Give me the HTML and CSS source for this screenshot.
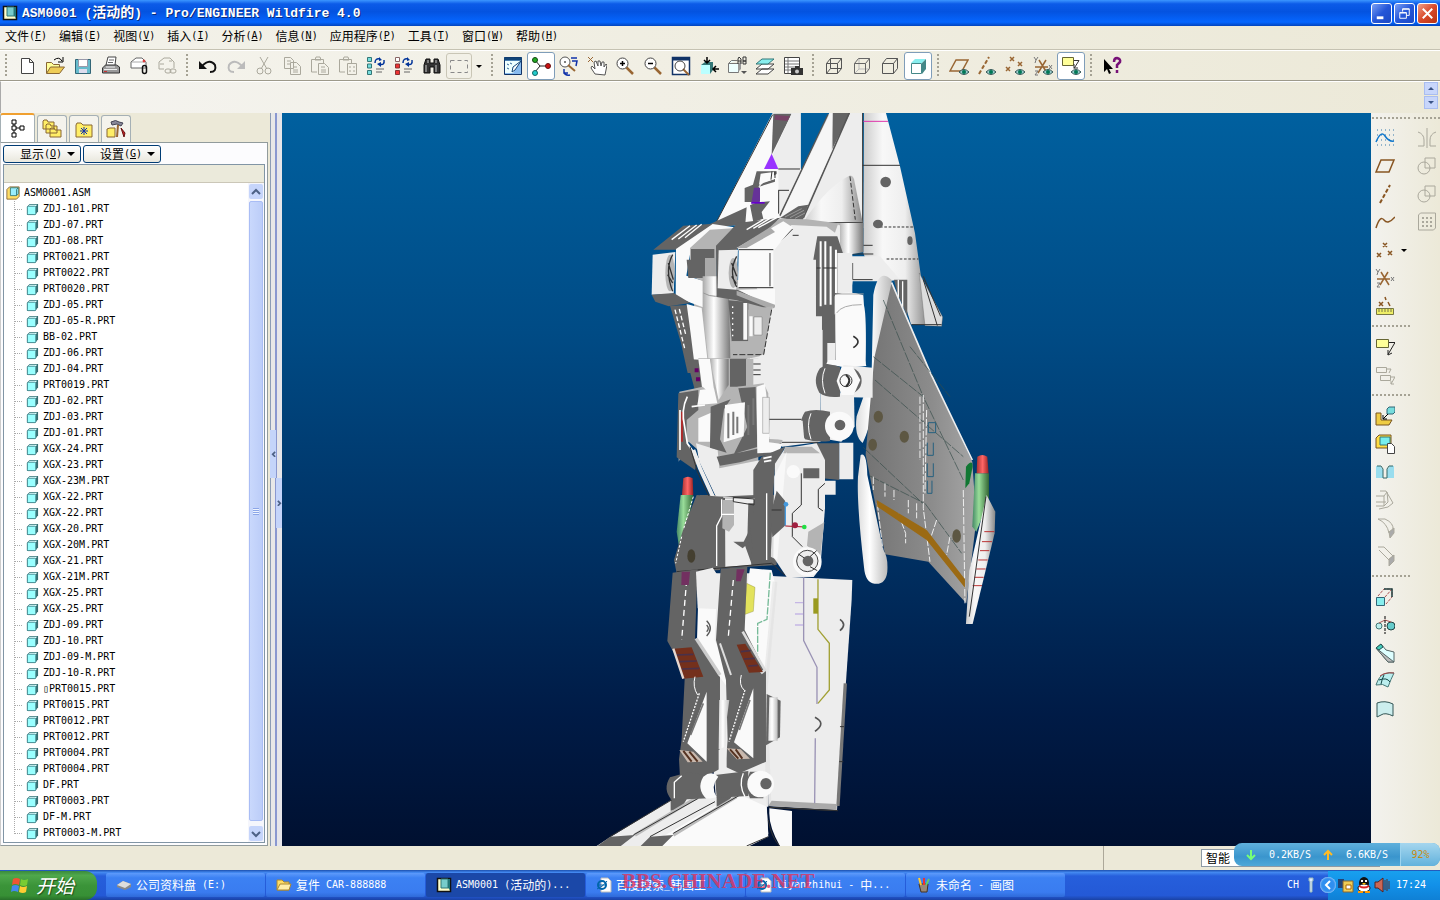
FILE: index.html
```html
<!DOCTYPE html>
<html lang="zh-CN">
<head>
<meta charset="UTF-8">
<meta name="viewport" content="width=device-width, initial-scale=1.0">
<title>ASM0001 (活动的) - Pro/ENGINEER Wildfire 4.0</title>
<link rel="stylesheet" href="styles.css">
</head>
<body>
    <!-- shared icon parts -->
    <svg class="defs" aria-hidden="true">
        <defs>
            <linearGradient id="tube"><stop offset="0" stop-color="#aaa"/><stop offset=".4" stop-color="#fff"/><stop offset="1" stop-color="#777"/></linearGradient>
            <linearGradient id="float"><stop offset="0" stop-color="#ddd"/><stop offset=".4" stop-color="#fff"/><stop offset="1" stop-color="#bbb"/></linearGradient>
            <linearGradient id="cone"><stop offset="0" stop-color="#ccc"/><stop offset=".3" stop-color="#f8f8f8"/><stop offset=".65" stop-color="#eee"/><stop offset="1" stop-color="#888"/></linearGradient>
            <linearGradient id="wing" x1="0" y1="0" x2="1" y2="0"><stop offset="0" stop-color="#737373"/><stop offset=".6" stop-color="#8c8c8c"/><stop offset="1" stop-color="#a6a6a6"/></linearGradient>
            <linearGradient id="green"><stop offset="0" stop-color="#486"/><stop offset=".4" stop-color="#9d9"/><stop offset="1" stop-color="#363"/></linearGradient>
            <linearGradient id="red"><stop offset="0" stop-color="#a33"/><stop offset=".5" stop-color="#f66"/><stop offset="1" stop-color="#922"/></linearGradient>
        </defs>
        <symbol id="part" viewBox="0 0 14 14">
            <path d="M1 4l3-3h9v8l-3 4H1z" fill="#356f73"/><path d="M2 4l2-2h8l-2 2z" fill="#dff"/><rect x="1.5" y="3.500" width="9" height="9" rx="1" fill="#9ff" stroke="#4a8f94"/>
        </symbol>
        <symbol id="assembly" viewBox="0 0 16 16">
            <path d="M1 4l3-3h11v11l-3 3H1z" fill="#fd6" stroke="#863"/><path d="M5 2h9v7l-2 2H5z" fill="#9ef" stroke="#377"/><path d="M12 4v7M12 4l2-2" stroke="#377"/>
        </symbol>
        <symbol id="proe" viewBox="0 0 16 16">
            <path d="M1.500 1.500h13v13h-13z" fill="#ffc" stroke="#111" stroke-width="1.500"/><path d="M5 2h7v9H5z" fill="#7cc" stroke="#377"/><path d="M12 2v9l2 2V2z" fill="#277"/>
        </symbol>
        <symbol id="eye" viewBox="0 0 10 6"><path d="M0 3q5-5 10 0q-5 5-10 0" fill="#9cc" stroke="#355"/><circle cx="5" cy="3" r="2" fill="#075"/></symbol>
        <symbol id="wire" viewBox="0 0 20 20"><path d="M2.500 7.500h11v10h-11zM6.500 2.500h11v10h-11zM2.500 7.500l4-5M13.500 7.500l4-5M13.500 17.500l4-5M2.500 17.500l4-5"/></symbol>
        <symbol id="axes" viewBox="0 0 20 20"><path d="M2 11h13M5 17L13 4M6 4l8 13" stroke="#963" stroke-width="1.500"/><path d="M1 1l2 3 2-3M3 4l-1 3M16 9l3 4M19 9l-3 4M2 15h3l-3 4h3" stroke="#777"/></symbol>
        <symbol id="circlesq" viewBox="0 0 20 20"><circle cx="7" cy="12" r="6"/><path d="M8 2h10v10H8z"/></symbol>
        <symbol id="page-e" viewBox="0 0 16 16"><path d="M5 1h7l3 3v11H5z" fill="#fff" stroke="#bbb"/><circle cx="6" cy="8" r="4" fill="none" stroke="#06a" stroke-width="2"/><path d="M3 8h6M1 12Q8 9 11 4" stroke="#06a" fill="none"/></symbol>
    </svg>

    <header class="titlebar">
        <svg class="icon16" viewBox="0 0 16 16"><use href="#proe"/></svg>
        <h1>ASM0001 (<span>活动的</span>) - Pro/ENGINEER Wildfire 4.0</h1>
        <div class="window-buttons">
            <button aria-label="最小化"><svg viewBox="0 0 20 20"><path d="M5 14.500h7" stroke-width="3"/></svg></button>
            <button aria-label="还原"><svg viewBox="0 0 20 20"><path d="M8 8V5h7v7h-3M5 9h7v6H5zM8 5.500h7M5 9.500h7"/></svg></button>
            <button class="close" aria-label="关闭"><svg viewBox="0 0 20 20"><path d="M5 5l10 10M15 5L5 15" stroke-width="2"/></svg></button>
        </div>
    </header>

    <nav class="menubar">
        <button>文件<i>(<u>F</u>)</i></button>
        <button>编辑<i>(<u>E</u>)</i></button>
        <button>视图<i>(<u>V</u>)</i></button>
        <button>插入<i>(<u>I</u>)</i></button>
        <button>分析<i>(<u>A</u>)</i></button>
        <button>信息<i>(<u>N</u>)</i></button>
        <button>应用程序<i>(<u>P</u>)</i></button>
        <button>工具<i>(<u>T</u>)</i></button>
        <button>窗口<i>(<u>W</u>)</i></button>
        <button>帮助<i>(<u>H</u>)</i></button>
    </nav>

    <div class="toolbar">
        <span class="grip"></span>
        <button aria-label="新建"><svg viewBox="0 0 20 20"><path d="M4.500 2.500h8l4 4v11h-12zM12.500 2.500v4h4" fill="#fff" stroke="#444"/></svg></button>
        <button aria-label="打开"><svg viewBox="0 0 20 20"><path d="M1.500 17V6.500h5l2 2h6V11" fill="#ff9" stroke="#863"/><path d="M1.500 17.500l4-6.500h14l-5 6.500z" fill="#ec5" stroke="#863"/><path d="M9 4q5-4 8 1M18 1v5h-5" stroke="#000"/></svg></button>
        <button aria-label="保存"><svg viewBox="0 0 20 20"><path d="M2.500 3.500h15v14h-15z" fill="#6bc" stroke="#367"/><path d="M5.500 3.500h9v7h-9z" fill="#fff" stroke="#99a"/><path d="M6 13h8v4H6z" fill="#dde"/></svg></button>
        <button aria-label="打印"><svg viewBox="0 0 20 20"><path d="M5 9l2-8h8l-1 8" fill="#fff" stroke="#444"/><path d="M8 4h5M7 6.500h5" stroke="#666"/><path d="M1.500 12l3-3h11l3 2v6h-17z" fill="#999" stroke="#333"/><path d="M3 13.500h13M5 11h9" stroke="#eee"/><path d="M3 15.500h3" stroke="#c33"/></svg></button>
        <button aria-label="发送邮件"><svg viewBox="0 0 20 20"><path d="M2 12V6l5-4h6l4 4v6z" fill="#fff" stroke="#666"/><path d="M3 6h14" stroke="#aaa"/><circle cx="15" cy="5" r="1" fill="#d33" stroke="#d33"/><rect x="13.500" y="9.500" width="4" height="8" rx="2" stroke="#111" stroke-width="1.500"/></svg></button>
        <button aria-label="发送链接"><svg class="off" viewBox="0 0 20 20"><path d="M7 13H2V6l5-4h6l4 4v6M3 8h4M12 5h3"/><rect x="8" y="13" width="6" height="4" rx="2"/><rect x="13" y="13" width="6" height="4" rx="2"/></svg></button>
        <span class="grip"></span>
        <button aria-label="撤消"><svg viewBox="0 0 20 20"><path d="M4 10q8-8 13-1q2 7-5 7" stroke="#111" stroke-width="2"/><path d="M1 5v8h8z" fill="#111"/></svg></button>
        <button aria-label="重做"><svg viewBox="0 0 20 20"><path d="M16 10Q8 2 3 9q-2 7 5 7" stroke="#bbb" stroke-width="2"/><path d="M19 5v8h-8z" fill="#bbb"/></svg></button>
        <button aria-label="剪切"><svg class="off" viewBox="0 0 20 20"><path d="M6 1l7 12M14 1L7 13"/><circle cx="6" cy="15" r="3"/><circle cx="14" cy="15" r="3"/></svg></button>
        <button aria-label="复制"><svg class="off" viewBox="0 0 20 20"><path d="M2.500 1.500h6l3 3v8h-9zM8.500 6.500h6l4 4v8h-10zM5 5h4M5 8h3M11 11h4M11 14h5M11 16h5"/></svg></button>
        <button aria-label="粘贴"><svg class="off" viewBox="0 0 20 20"><path d="M7 16H1.500V3.500h12V7M5 4l1-3h4l1 3zM8.500 7.500h6l4 4v7h-10zM11 11h4M11 14h5M11 16h5"/></svg></button>
        <button aria-label="选择性粘贴"><svg class="off" viewBox="0 0 20 20"><path d="M7 16H1.500V3.500h12V7M5 4l1-3h4l1 3zM9.500 7.500h9v11h-9zM11 11h2M11 15h2M15 11h2M15 15h2"/></svg></button>
        <button aria-label="再生"><svg viewBox="0 0 20 20"><path d="M1.500 1.500h4v4h-4zM1.500 8h4v4h-4zM1.500 14.500h4v4h-4z" fill="#7dd" stroke="#377"/><path d="M9 7q0-5 5-4M18 4q1 6-5 4" stroke="#039" stroke-width="1.500"/><path d="M13 1l3 3-3 1zM15 6l-4 2 4 3z" fill="#039"/><path d="M10 13h8M10 16h6" stroke="#666"/></svg></button>
        <button aria-label="再生管理器"><svg viewBox="0 0 20 20"><path d="M1.500 1.500h4v4h-4z" fill="#fff" stroke="#866"/><path d="M1.500 8h4v4h-4zM1.500 14.500h4v4h-4z" fill="#e33" stroke="#833"/><path d="M9 7q0-5 5-4M18 4q1 6-5 4" stroke="#039" stroke-width="1.500"/><path d="M13 1l3 3-3 1zM15 6l-4 2 4 3z" fill="#039"/><path d="M10 13h8M10 16h6" stroke="#666"/></svg></button>
        <button aria-label="查找"><svg viewBox="0 0 20 20"><path d="M4 3h4v4h4V3h4l2 6v8h-6v-6H8v6H2V9z" fill="#333" stroke="#111"/><path d="M4 9v7M14 9v7M6 4v3M14 4v3" stroke="#ccc"/></svg></button>
        <button class="framed" aria-label="选取框"><svg viewBox="0 0 20 20"><path d="M1.500 4.500h17v12h-17z" stroke="#888" stroke-dasharray="4 3"/></svg></button>
        <button class="narrow" aria-label="选取选项"><svg viewBox="0 0 8 20"><path d="M1 9h6l-3 3z" fill="#000"/></svg></button>
        <span class="grip"></span>
        <button aria-label="重画"><svg viewBox="0 0 20 20"><path d="M1.500 1.500h17v17h-17z" fill="#8be" stroke="#136"/><path d="M2 5h16l-8 12H2z" fill="#eff"/><path d="M1 3h18" stroke="#147" stroke-width="3"/><path d="M9 16l1-5 8-6-6 9z" fill="#fff" stroke="#147"/><path d="M4 8l2 1M7 7l2 1M4 12l2 1" stroke="#369"/></svg></button>
        <button class="on" aria-label="旋转中心"><svg viewBox="0 0 20 20"><path d="M4 4l5 6h8M9 10l-5 6" stroke="#222"/><circle cx="4" cy="4" r="2.500" fill="#2a2" stroke="#141"/><circle cx="17" cy="10" r="2.500" fill="#c11" stroke="#611"/><circle cx="4" cy="17" r="2.500" fill="#2cc" stroke="#166"/></svg></button>
        <button aria-label="定向模式"><svg viewBox="0 0 20 20"><circle cx="6" cy="6" r="5" fill="#fff" stroke="#555"/><path d="M5 6h2" stroke="#000"/><path d="M9 9l7 6" stroke="#963" stroke-width="2"/><path d="M12 2h6M13 5h5l-1 5M5 16q1 4 6 3M5 13v4h4" stroke="#13a" stroke-width="1.500"/></svg></button>
        <button aria-label="平移"><svg viewBox="0 0 20 20"><path d="M1 1l5 5M6 1L1 6" stroke="#963"/><path d="M8 18l-4-6 1-2 3 3-1-7 2-1 2 5V5h2l1 5 1-4h2v5l2-3 1 1-2 10z" fill="#fff" stroke="#555"/></svg></button>
        <button aria-label="放大"><svg viewBox="0 0 20 20"><path d="M11 11l7 7" stroke="#963" stroke-width="2.500"/><circle cx="7.500" cy="7.500" r="5.500" fill="#fff" stroke="#444"/><path d="M5 7.500h5M7.500 5v5" stroke="#000" stroke-width="1.500"/></svg></button>
        <button aria-label="缩小"><svg viewBox="0 0 20 20"><path d="M11 11l7 7" stroke="#963" stroke-width="2.500"/><circle cx="7.500" cy="7.500" r="5.500" fill="#fff" stroke="#444"/><path d="M5 7.500h5" stroke="#000" stroke-width="1.500"/></svg></button>
        <button aria-label="重新调整"><svg viewBox="0 0 20 20"><path d="M1.500 1.500h17v17h-17z" fill="#fff" stroke="#136" stroke-width="1.500"/><path d="M1 3h18" stroke="#136" stroke-width="3"/><path d="M12 13l6 6" stroke="#963" stroke-width="2"/><circle cx="9" cy="10" r="5" stroke="#444"/></svg></button>
        <button aria-label="重定向"><svg viewBox="0 0 20 20"><path d="M2 9l4-3h8v8l-3 4H2z" fill="#377"/><path d="M2 9h9v9H2z" fill="#bff"/><path d="M8 1v6M5 4l3 3 3-3M20 13h-6M17 10l-3 3 3 3" stroke="#000" stroke-width="1.500"/></svg></button>
        <button aria-label="视图列表"><svg viewBox="0 0 20 20"><path d="M1.500 7.500l3-3h6M11.500 7.500h-10v9h10z" fill="#eff" stroke="#777"/><path d="M11 8l3-3v8l-3 3z" fill="#999"/><path d="M11 8V3l1-2 2 2v5M11 5h3M16 1v7h3V5h-3h3V1z" stroke="#333"/><path d="M14 15h6l-3 3z" fill="#555"/></svg></button>
        <button aria-label="图层"><svg viewBox="0 0 20 20"><path d="M1 18l6-5h12l-6 5zM1 13l6-5h12l-6 5z" fill="#fff" stroke="#444"/><path d="M1 8l6-5h12l-6 5z" fill="#8ee" stroke="#377"/></svg></button>
        <button aria-label="视图管理器"><svg viewBox="0 0 20 20"><path d="M1.500 1.500h15v16h-15z" fill="#fff" stroke="#444"/><path d="M5 2v15M2 5h14M2 8h14M2 11h14M2 14h14" stroke="#777"/><path d="M8 12h12v7H8zM12 10h4v2h-4z" fill="#333"/><circle cx="14" cy="15.500" r="2" fill="#ccc"/></svg></button>
        <span class="grip"></span>
        <button aria-label="线框"><svg class="dark" viewBox="0 0 20 20"><use href="#wire"/></svg></button>
        <button aria-label="隐藏线"><svg viewBox="0 0 20 20"><path d="M3 17l4-4M7 13V3M7 13h10" stroke="#bbb"/><path d="M2.500 7.500h11v10h-11zM2.500 7.500l4-5h11v10l-4 5M13.500 7.500l4-5" stroke="#666"/></svg></button>
        <button aria-label="无隐藏线"><svg class="dark" viewBox="0 0 20 20"><path d="M2.500 7.500h11v10h-11zM2.500 7.500l4-5h11v10l-4 5M13.500 7.500l4-5"/></svg></button>
        <button class="on" aria-label="着色"><svg viewBox="0 0 20 20"><path d="M3 7l4-4h11l-4 4z" fill="#8ee"/><path d="M14 7l4-4v10l-4 5z" fill="#488"/><path d="M3.500 7.500h10v10h-10z" fill="#fff" stroke="#488"/></svg></button>
        <span class="grip"></span>
        <button aria-label="基准平面开关"><svg viewBox="0 0 20 20"><path d="M1 15L7 4h12l-6 11z" stroke="#963" stroke-width="1.500"/><use href="#eye" x="10" y="13" width="10" height="6"/></svg></button>
        <button aria-label="基准轴开关"><svg viewBox="0 0 20 20"><path d="M2 18L12 1" stroke="#963" stroke-width="2" stroke-dasharray="4 2"/><use href="#eye" x="9" y="13" width="10" height="6"/></svg></button>
        <button aria-label="基准点开关"><svg viewBox="0 0 20 20"><path d="M5 1l4 4M9 1L5 5M13 6l4 4M17 6l-4 4M1 11l4 4M5 11l-4 4" stroke="#963" stroke-width="1.500"/><use href="#eye" x="10" y="13" width="10" height="6"/></svg></button>
        <button aria-label="坐标系开关"><svg viewBox="0 0 20 20"><use href="#axes"/><use href="#eye" x="10" y="13" width="10" height="6"/></svg></button>
        <button class="on" aria-label="注释开关"><svg viewBox="0 0 20 20"><path d="M1.500 1.500h11v8h-11z" fill="#ff9" stroke="#663"/><path d="M13 4.500h5l-5 8M13 8v4h4" stroke="#333"/><use href="#eye" x="10" y="13" width="10" height="6"/></svg></button>
        <span class="grip"></span>
        <button aria-label="上下文帮助"><svg viewBox="0 0 20 20"><path d="M2 3v13l3-3 2 5 2-1-2-4h4z" fill="#000"/><path d="M12 6q0-4 3-4 4 1 3 4l-3 3v3M15 14v3" stroke="#717" stroke-width="2.500"/></svg></button>
    </div>

    <div class="dashboard">
        <div class="stepper">
            <button aria-label="上一条"><svg viewBox="0 0 12 12"><path d="M3 7l3-3 3 3z"/></svg></button>
            <button aria-label="下一条"><svg viewBox="0 0 12 12"><path d="M3 4l3 3 3-3z"/></svg></button>
        </div>
    </div>

    <main>
        <aside class="navigator">
            <div class="tabs">
                <button class="active" aria-label="模型树"><svg viewBox="0 0 20 20"><path d="M4 1h4v4H4zM4 7h4v4H4zM4 14h4v4H4zM12 7h4v4h-4zM6 5v2M6 11v3M8 9h4" stroke="#000"/></svg></button>
                <button aria-label="文件夹浏览器"><svg viewBox="0 0 20 20"><path d="M1 10V2l1-1h3l1 2h6v7zM4 14V6l1-1h3l1 2h6v7zM8 18v-8l1-1h3l1 2h6v7z" fill="#fe6" stroke="#863"/></svg></button>
                <button aria-label="收藏夹"><svg viewBox="0 0 20 20"><path d="M2 18V6l1-2h4l2 2h9v12z" fill="#fe6" stroke="#863"/><path d="M10 8v8M6 12h8M7 9l6 6M13 9l-6 6" stroke="#13a"/></svg></button>
                <button aria-label="连接"><svg viewBox="0 0 20 20"><path d="M1 18v-8l3-1h5v9z" fill="#fe6" stroke="#863"/><path d="M5 3q5-3 8 0l4 1-2 3-4-2-5 1z" fill="#889" stroke="#445"/><path d="M12 6l-1 12" stroke="#963" stroke-width="2"/><path d="M15 9l4 5-1 4z" fill="#c22" stroke="#611"/></svg></button>
            </div>
            <div class="nav-body">
                <div class="nav-buttons">
                    <button>显示<i>(<u>O</u>)</i><span class="caret"></span></button>
                    <button>设置<i>(<u>G</u>)</i><span class="caret"></span></button>
                </div>
                <div class="tree-box">
                    <div class="tree-head"></div>
                    <div class="tree-scroll">
                        <div class="tree">
                            <div class="root"><svg viewBox="0 0 16 16"><use href="#assembly"/></svg>ASM0001.ASM</div>
                            <ul id="parts"></ul>
                        </div>
                        <div class="scrollbar">
                            <button aria-label="向上滚动"><svg viewBox="0 0 12 12"><path d="M2 8l4-4 4 4"/></svg></button>
                            <div class="thumb"><span></span></div>
                            <button aria-label="向下滚动"><svg viewBox="0 0 12 12"><path d="M2 4l4 4 4-4"/></svg></button>
                        </div>
                    </div>
                </div>
            </div>
        </aside>
        <div class="splitter">
            <button class="fold" aria-label="收起导航器"><svg viewBox="0 0 6 8"><path d="M5 1L2 4l3 3"/></svg></button>
            <button class="unfold" aria-label="展开浏览器"><svg viewBox="0 0 6 8"><path d="M1 1l3 3-3 3"/></svg></button>
        </div>

        <section class="viewport">
            <svg viewBox="282 113 1089 733" preserveAspectRatio="xMidYMid slice" role="img" aria-label="ZDJ 装配模型">
                <!-- rocket, fins and chest -->
                <g transform="translate(590 113) scale(.3333)">
                    <path class="m" d="M300 500h260v282H345z"/>
                    <path class="w" d="M548 0L375 335l190 5 78-170h-11V0h-25z"/>
                    <path class="d" d="M550 2h55l-60 123z"/><path d="M555 6l45 4-8 14-38-4z" fill="#746"/>
                    <path class="l" d="M606 0h26v170h-70l-14-45z"/>
                    <path class="k" d="M548 5L375 335"/>
                    <path d="M545 122l-23 46h43z" fill="#93f"/>
                    <path class="w" d="M510 180l50-8h82l-42 130-90 30-20-60z"/><path class="l" d="M565 168h72l-45 120-26 10z"/>
                    <path class="d" d="M500 175h60v8l-38 22-16 20-6 42h-36v-42l25-10zM500 268l40-3-25 32 5 20-30 10-10-50zM505 222l50-16v-8l-42 12z"/><path class="w" d="M512 182l40-5v22l-45 16z"/>
                    <path d="M492 224h18v42l-26 6z" fill="#639"/><path d="M484 267h40v5h-40z" fill="#60c"/>
                    <path class="k" d="M565 168h65M565 232h32M566 232v70M546 175l-3 25M555 175v20"/>
                    <path class="l" d="M718 0h100l2 345-250-20-2-15z"/><path class="d" d="M728 0h52l-55 112z"/>
                    <path d="M715 4L570 308M778 0L640 315" stroke="#555" stroke-width="5" fill="none"/>
                    <path class="w" d="M718 0h10v110L640 300l-68 10z" opacity=".7"/>
                    <path class="d" d="M570 315l55-35 30-5-18 50z"/><path d="M585 312l50-25M600 314l42-22M615 316l30-16" stroke="#999" stroke-width="3"/>
                    <path d="M822 0h66l42 160 45 200 38 276-50-2-40-134-75-5-28-75z" fill="url(#cone)"/>
                    <path d="M820 25h74" stroke="#d3a" stroke-width="3"/><path class="k" d="M818 157h112M818 0v400"/><path class="k" d="M870 342h105M890 438h95" stroke-dasharray="8 5"/>
                    <circle class="d" cx="887" cy="207" r="16"/><ellipse class="d" cx="864" cy="333" rx="15" ry="13"/><ellipse class="d" cx="960" cy="383" rx="8" ry="13"/>
                    <path d="M988 480l70 132-3 28-50-2z" fill="#ddd" stroke="#555"/><path class="k" d="M1000 500l42 138M965 635h90M1000 490l52 120"/>
                    <path class="l" d="M760 430h110l60 70-40 5H788l-6 40h-24z"/><path class="k" d="M788 450v50M788 500h60M745 423h105M820 397h28"/>
                    <path class="d" d="M912 500h40v110l-30-70z"/><path d="M925 500v60M938 505v80" stroke="#fff" stroke-width="4"/>
                    <path d="M778 188q-60 30-125 120l-13 20h178l-26-130q-5-12-14-10z" fill="url(#cone)"/><path class="k" d="M650 329h166"/><path class="k" d="M780 190l16 130" stroke-dasharray="14 6"/>
                    <path d="M745 330h75v88l-38 6-37-6z" fill="url(#tube)"/>
                    <path class="l" d="M440 400l120-65 80-8 110 10v300l-30 50v110H520l-20-30 40-160z"/>
                    <path class="m" d="M440 405l130-88 80 2 95 12-10 28-25-18-105-5-100 70z"/>
                    <path class="d" d="M682 370h60l20 60v110l-28 10v110l-38-10V610h-18V440h-8z"/>
                    <path d="M692 385v195M706 385v190M722 400v175M738 410v130" stroke="#fff" stroke-width="6"/><path class="k" d="M680 465h12M700 465h40M608 367h18M608 348l-60 60"/>
                    <path class="l" d="M742 420h45v120h-45z"/>
                    <path class="d" d="M698 640l40-40v170h-40z"/>
                    <path class="w" d="M735 545q45-14 85 2l2 30q8 30 5 175h-90z"/><path d="M740 600q15-25 75-25M737 543h84" stroke="#aaa" stroke-width="3"/><path d="M712 690h24v56h-24z" class="l"/>
                    <path d="M790 670q28 15 0 34" stroke="#333" stroke-width="5" fill="none"/>
                    <!-- shoulders -->
                    <path class="d" d="M190 410l90-72 80-5 110-50-4 50-86 10-120 67z"/>
                    <path d="M245 380l55-42M265 378l55-42M285 374l50-40" stroke="#fff" stroke-width="4"/>
                    <path class="w" d="M258 408l110-75 65 10-90 55-40 10-14 80 50 15v80l-82-30z"/>
                    <path class="l" d="M188 425l68-8-5 125-66 3z"/><path class="d" d="M185 545l66-5 50 30-65 10-40-14z"/>
                    <ellipse class="m" cx="240" cy="480" rx="14" ry="55"/><path d="M248 425q-25 45 0 110M235 450l15 50M233 485l15 25" stroke="#333" stroke-width="4" fill="none"/>
                    <path class="m" d="M300 405l60-55 80-5-60 55v120l-80-30z"/><path class="d" d="M303 408h70v32h-70zM290 440h55v55h-50z"/><path class="g" d="M345 435h32v60h-32z"/>
                    <path d="M338 490h78l6 292h-62l-22-190z" fill="url(#tube)"/><path d="M340 540q35 20 75 0" stroke="#999" stroke-width="3"/>
                    <path class="d" d="M378 398l65-68 128-16-50 46-80 48-5 120 110 48-6 12-100-26-60-10z"/>
                    <path d="M470 350l50-30M490 346l50-30M505 344l55-30" stroke="#fff" stroke-width="4"/>
                    <path class="w" d="M440 405l140-80 28 18-55 68z"/><path class="g" d="M440 405l100-62 15 14-85 48z"/>
                    <path class="l" d="M386 412l58-2-5 120-56-4z"/><path class="w" d="M446 410l104 2v112l-106-1z"/><path class="w" d="M445 530l110-3v48l-10 8z"/><path class="g" d="M440 533l115 42v8l-10 6-105-42z"/>
                    <ellipse class="m" cx="430" cy="480" rx="14" ry="45"/><path d="M440 430q-25 45 0 92M425 450l15 40M425 490l14 22" stroke="#333" stroke-width="4" fill="none"/><path class="k" d="M446 410h104M446 524h104M540 420v100"/>
                    <!-- ribs -->
                    <path class="d" d="M240 578l58-2 25 60 30 144h-60l-20-90z"/><path class="w" d="M290 573l45 12 22 197h-40l-15-120z"/>
                    <path d="M255 590l30 120M268 588l20 80" stroke="#fff" stroke-width="4" stroke-dasharray="14 7"/>
                    <path class="d" d="M415 562l60 5v118h-50zM420 735h50v47h-50z"/><path class="m" d="M475 590l72-10-25 145h-95l-2-40h50z"/><path class="w" d="M460 570h12v110h-12zM478 610h10v60h-10zM472 735h12v46h-12z"/><path class="l" d="M492 612h24v54h-24z" stroke="#555"/>
                    <path class="l" d="M548 580l12 200h-75v-45l45-10z"/>
                    <path class="k" d="M545 590l-24 135h-92" stroke-dasharray="18 6"/><path class="k" d="M490 745h20M490 755h20M490 765h20"/><path d="M428 580v90" stroke="#fff" stroke-width="4" stroke-dasharray="5 12"/>
                </g>

                <!-- wing, waist and thighs -->
                <g transform="translate(590 360) scale(.3333)">
                    <path class="m" d="M325-5h180v420H380l-55-130z"/>
                    <path class="d" d="M330 405h230v210l-230 15z"/>
                    <path d="M905 -240q-40-40-55 45L845 39l-45 130q-8 60 18 80 20-40 45-150l42-270z" fill="url(#float)"/>
                    <path d="M905-232L1022 40l125 265 12 175-30 250-114-125-130-22-58-300 26-290z" fill="url(#wing)"/>
                    <path d="M1147 300L1022 40 905-232" stroke="#eee" stroke-width="5" fill="none"/>
                    <path d="M850-10L1000 110l120 250M855 60l265 230M820 262l180 170M840 348l160 80M880-180l120 290M960-40l120 150M1005 430l110 150" stroke="#354b48" stroke-width="2" stroke-dasharray="30 4" fill="none"/>
                    <path d="M1000 105v340l20 160M990 110v190M1010 150l-5 250M862 430l18 150M1120 390l5 340M850 350v40M885 370v40M912 390v30M955 420v40M980 430v45M1040 480l-20 60M1080 530l-10 55M925 460l22 60v30" stroke="#eee" stroke-width="3" stroke-dasharray="22 5" fill="none"/>
                    <path d="M1015 188h22v30h-22zM1012 248v38h18v-38M1012 310v40h18v-40M1012 362v38h14v-38" stroke="#256080" stroke-width="3" fill="none"/>
                    <path d="M860 420l150 90 115 148v25L1010 540 862 440z" fill="#9b6a14"/>
                    <g fill="#5d5743"><ellipse cx="865" cy="170" rx="14" ry="18"/><ellipse cx="943" cy="230" rx="14" ry="18"/><ellipse cx="848" cy="254" rx="13" ry="18"/><ellipse cx="1100" cy="528" rx="13" ry="20"/></g>
                    <path d="M812 285q18-10 20 60l48 225q15 20 12 65-5 40-38 36-28-2-32-50-22-190-18-270z" fill="url(#float)"/>
                    <path d="M1128 320q20-25 20 0l-10 50-12 15z" fill="#173"/>
                    <path d="M1155 340h42v80l-38 95-12-15z" fill="url(#green)"/><path d="M1162 290q15-10 30 0l4 50h-36z" fill="url(#red)"/>
                    <path d="M1190 405l26 50-2 65-66 272h-20l10-160z" fill="url(#cone)"/><path d="M1183 515h30M1176 545h30M1170 572h28M1165 600h28M1159 627h28M1153 652h28M1148 677h28" stroke="#b33" stroke-width="3"/>
                    <path class="k" d="M1188 410l-50 360"/>
                    <!-- waist -->
                    <path class="l" d="M480-5h212v250l-115 15-90-60z"/>
                    <path class="d" d="M420-3h48v83h-48zM290-3l40 2 15 93h-30z"/><path class="w" d="M325-3h35l12 93h-35z"/><path class="m" d="M468-3h22v83h-22z"/>
                    <path d="M314 25h12v12h-12zM318 52h12v12h-12z" fill="#606"/>
                    <path d="M360-3h56v78l-30 45z" fill="url(#tube)"/><path class="k" d="M490 12h22M490 30h22M490 44h22M535 178h100M575 247h110"/>
                    <path class="m" d="M268 95l70-15 50 45 55-45 78-10 14 30-2 130 45 10-12 30-110 30-70 25-90-80-30 60z"/>
                    <path class="d" d="M265 100l60-10v60l-35 30v70l35 40-10 40-55-38z"/><path d="M276 155v90" stroke="#b22" stroke-width="5"/>
                    <path d="M292 110q-20 40-8 90l8 50 35 50M305 140l40-5M270 150v120" stroke="#fff" stroke-width="5" fill="none"/>
                    <path class="w" d="M330 90l42-5 10 45-60 5zM325 175l45-20-10 90h-35z"/>
                    <path class="l" d="M318 250l65 20 5 55 125-25 10 60-25 45-120 5-50-105z"/><path d="M310 270l20 55 40 88 60 5" stroke="#eee" stroke-width="12" fill="none"/><path class="k" d="M300 260l22 75 38 80h130"/>
                    <path class="d" d="M362 140l60-22-20 30-12 90 20 40-50-15zM380 290l80-15 95-20 20-6-25 30-100 28-60 10zM445 85l52-4 5 180-70 20 40-80z"/>
                    <path class="w" d="M405 135l60-8-4 102-60 18z"/><path d="M415 160v75M430 155v70M442 170v50M475 135v90M490 115v80" stroke="#777" stroke-width="6"/>
                    <path class="w" d="M500 80l25-8 12 100v75l40 5-10 25-65 3z"/><path class="l" d="M518 112h20v108h-20z" stroke="#555"/>
                    <path class="d" d="M515 290l70-30-30 60-5 80-10 150-50 40V330z"/><path d="M520 295l25-5M522 305l22-4" stroke="#fff" stroke-width="5"/>
                    <!-- hip and arm joints -->
                    <path class="l" d="M692 100h100l2 100-40 45-60-10z"/><path class="w" d="M715 0h110l4 18-60 5-60-12z"/><path class="l" d="M760 15l88 8v90l-98-2z"/>
                    <path class="d" d="M690 25q20-15 60-5v90q-40 5-62-12-22-38 2-73zM645 155q30-10 75 0v88q-40 5-75-5-25-45 0-83z"/>
                    <circle cx="775" cy="62" r="40" class="d"/><path class="w" d="M755 20h34l22 40-20 45h-36l-15-42z"/><circle cx="768" cy="62" r="18" class="k"/><path d="M768 45q20 15 0 35" stroke="#333" stroke-width="6" fill="none"/>
                    <circle class="w" cx="748" cy="198" r="43"/><circle class="d" cx="750" cy="195" r="16"/><path d="M705 25q-15 35 0 75M663 160q-15 35 0 78" stroke="#fff" stroke-width="3" fill="none"/>
                    <path class="l" d="M540 182h98l5 60-105-5z"/>
                    <path class="d" d="M670 250h78v110l-50-5z"/><path class="l" d="M748 248h42v110h-42zM705 362h32v42h-32z"/>
                    <!-- thighs -->
                    <path class="l" d="M585 265l95-15 25 50v145l-14 180-20 26H590l-40-60 5-280z"/><path class="m" d="M585 260h80l25 20h-110zM655 515l48-28-12 100-40-30z"/><path class="w" d="M590 275l-38 75v50l-10 190 20 10z" opacity=".8"/>
                    <circle cx="610" cy="335" r="20" class="w"/><path class="d" d="M640 325h48v30h-48zM560 392l25 30v75l-38 35-5-70z"/>
                    <path class="k" d="M634 340v95l-27 25v70l30 30M705 370l-20 18v55l14 10M545 450h30"/><path d="M586 425v72" stroke="#49d" stroke-width="4"/><circle cx="588" cy="433" r="7" fill="#49d"/><path d="M586 498l58 3" stroke="#a12" stroke-width="3"/><circle cx="615" cy="496" r="9" fill="#a02040"/><circle cx="643" cy="501" r="7" fill="#2d4"/>
                    <path d="M272 405h38l-20 110-22 50-8-50z" fill="url(#green)"/><path d="M280 355q14-10 28 0l2 50h-34z" fill="url(#red)"/>
                    <path class="d" d="M320 405l80 5-10 220-130 10-8-40 30-100zM340 415h60l60 10v195H330z"/><path class="l" d="M405 415h88l-2 70-30 60 25 70-80 5z"/><path class="m" d="M398 420h34v75l-15 20-20-10z"/><path class="d" d="M475 430h35v170h-28l-10-60z"/>
                    <path class="d" d="M492 420h50v190l-58 5 3-60-12-90 17-10zM430 545h50l-22 20z"/><path d="M395 418v50l-15 30v120M530 400v200M396 463h36" stroke="#fff" stroke-width="4" fill="none"/><path class="k" d="M430 412l62 5v18l-62-10zM260 635l120-10 165-15 40 35"/>
                    <path d="M275 530l-18 80M310 410l-30 100" stroke="#fff" stroke-width="3" stroke-dasharray="8 5"/><ellipse cx="304" cy="588" rx="12" ry="20" fill="#443f30"/>
                    <circle cx="652" cy="605" r="43" class="w"/><circle cx="652" cy="603" r="32" class="l" stroke="#444" stroke-width="3"/><circle cx="654" cy="603" r="16" class="d"/><path class="k" d="M625 582l18 12M660 620l22 12M660 590l20-18"/>
                </g>

                <!-- shins, shield and feet -->
                <g transform="translate(590 560) scale(.3333)">
                    <path class="l" d="M320 40h170l45 40v660H380z"/>
                    <path class="l" d="M545 48l242 12-2 60-36 520-8 110-205-12-12-350z"/><path class="w" d="M480 25l65 5 10 40-30 300-75-140z"/>
                    <path d="M555 65l-30 330 12 340" stroke="#ddd" stroke-width="14" fill="none" opacity=".5"/>
                    <path d="M766 370l-22 368" stroke="#777" stroke-width="10"/><path class="g" d="M545 722l195 10v18l-205-12z"/><path class="k" d="M538 742l205 10M750 500h12M748 605h12"/>
                    <path d="M641 52v190l40 80v110M676 535l-2 195" stroke="#9a93b5" stroke-width="4" fill="none"/><path d="M615 128h24M615 162h24M615 195h24" stroke="#c5b6e5" stroke-width="4"/>
                    <path d="M684 58v150l34 42v140l-34 40" stroke="#a2a135" stroke-width="4" fill="none"/><path d="M670 115h14v46h-14z" fill="#9a9a20"/>
                    <path d="M750 178q22 15 0 34M675 472q35 18 0 42" stroke="#555" stroke-width="5" fill="none"/>
                    <path d="M541 38l-10 140-28 12v90" stroke="#7b9" stroke-width="4" stroke-dasharray="22 4" fill="none"/>
                    <path d="M470 70l25 12-5 72-28 10z" fill="#e2e25c" stroke="#772"/>
                    <path class="d" d="M248 38l75-10-8 210 75 110v80l-2 200-116 60-5-90 8-60 10-200-53-95z"/>
                    <path class="w" d="M325 110h55l-6 130 40 80v65l-25-35-68-110z"/><path class="l" d="M318 35l50-12 30 45-5 80-70-3z"/><path d="M318 235l72 110" stroke="#ccc" stroke-width="10"/>
                    <path class="d" d="M392 26l80-6-8 190 64 125v270l-80 35-42-20 7-80-5-180-30-120z"/>
                    <path d="M290 60l-15 180M430 60l-15 170" stroke="#fff" stroke-width="4" stroke-dasharray="18 12"/>
                    <path d="M275 35h25l-4 40h-22zM440 28h24l-12 36h-14z" fill="#723060"/>
                    <path d="M458 215l67 115-12 10" stroke="#ddd" stroke-width="8" fill="none"/>
                    <path d="M250 266l55-4 35 88-60 6zM440 254l26-3 53 85-42 2z" fill="#74301c"/><path d="M258 285l52-2M268 305l52-2M276 327l52-2M452 275l30-3M462 297l32-2M475 318l28-2" stroke="#49314a" stroke-width="5"/><path d="M250 266l30 90" stroke="#e6d8d0" stroke-width="7"/>
                    <path d="M390 250l33 95" stroke="#ddd" stroke-width="6" fill="none"/><circle cx="352" cy="205" r="16" class="w"/><path d="M350 182q22 22 0 46M350 195q10 10 0 20" stroke="#555" stroke-width="4" fill="none"/>
                    <path class="w" d="M350 395v210l-58-55zM490 385v210l-58-48z"/><path d="M340 430l-38 95M480 420l-32 90" stroke="#777" stroke-width="5"/>
                    <path d="M328 400l-48 145M465 390l-48 155" stroke="#fff" stroke-width="4" stroke-dasharray="6 4"/><path d="M315 350q-8 30 8 55M454 345q-8 30 8 45" stroke="#fff" stroke-width="3" fill="none"/>
                    <path d="M268 570l42 5 28 30-45 2zM410 565l42 3 28 28-40 2z" fill="#c9b9ae"/><path d="M280 573l25 32M298 575l25 30M420 568l25 28M437 568l20 28" stroke="#532" stroke-width="6"/>
                    <path d="M388 420h30l-8 60-4 80-20 8z" fill="url(#float)"/><path d="M530 402l42 20-2 110-42 24z" fill="#666"/><path d="M538 412h25v130h-28z" fill="url(#float)"/>
                    <path class="l" d="M386 570l24-5v80h-24z"/>
                    <!-- feet -->
                    <path class="l" d="M60 832l180-110 90-15 130 0 70 25 5 90-65 36H20z"/><path class="w" d="M210 835l230-135 90 40 5 90-60 30H190z"/>
                    <path class="d" d="M60 830l75-5-45 35H20zM180 830l70-5-35 35h-65zM242 715h50l-20 32-30 5zM380 705h50l-25 30-25 5z"/>
                    <path d="M135 825l190-115M250 825l190-115" stroke="#bbb" stroke-width="10"/><path class="k" d="M60 830l210-125M180 830l195-105M130 825l195-110M250 820l200-115"/>
                    <path class="d" d="M240 652l55-15 60 10v68l-110 5q-28-32-5-68zM375 645l100-12v75l-95 5z"/><path class="w" d="M340 650q25-20 45 0-25 30-5 62l-30 5q-32-30-10-67z"/>
                    <path d="M275 647l-22 20v48M460 640q-15 35 5 70" stroke="#fff" stroke-width="4" fill="none"/><path class="d" d="M480 635h40v80h-40q-20-40 0-80z"/><circle cx="512" cy="672" r="40" class="w"/><circle cx="528" cy="671" r="17" class="d"/>
                    <path class="w" d="M538 745l68 8v107h-35q-35-60-33-105z"/><path class="k" d="M535 780q8 50 35 80M470 858l65-28M538 742l205 10"/>
                </g>
            </svg>
        </section>

        <aside class="features">
            <div class="feature-col">
                <span class="grip-h"></span>
                <button aria-label="草绘"><svg viewBox="0 0 20 20"><path d="M2 2h17M2 7h17M2 12h17M2 17h17" stroke="#37a" stroke-dasharray="1 3"/><path d="M1 14Q6 2 10 8t9 5" stroke="#17c" stroke-width="1.500"/></svg></button>
                <button aria-label="平面"><svg viewBox="0 0 20 20"><path d="M1 16L6 4h13l-5 12z" stroke="#852" stroke-width="1.500"/></svg></button>
                <button aria-label="轴"><svg viewBox="0 0 20 20"><path d="M5 19L15 1" stroke="#852" stroke-width="2" stroke-dasharray="4 2"/></svg></button>
                <button aria-label="曲线"><svg viewBox="0 0 20 20"><path d="M1 16Q5 3 9 8t11-3" stroke="#852" stroke-width="1.500"/></svg></button>
                <button class="with-menu" aria-label="点"><svg viewBox="0 0 20 20"><path d="M8 3l4 4M12 3L8 7M13 11l4 4M17 11l-4 4M2 13l4 4M6 13l-4 4" stroke="#852" stroke-width="1.500"/></svg><span class="caret"></span></button>
                <button aria-label="坐标系"><svg viewBox="0 0 20 20"><use href="#axes"/></svg></button>
                <button aria-label="分析"><svg viewBox="0 0 20 20"><path d="M4 6l4 4M8 6l-4 4M10 1l1 3M13 6l2 4" stroke="#852" stroke-width="1.500"/><path d="M1.500 12.500h17v6h-17z" fill="#ee6" stroke="#774"/><path d="M4 13v3M7 13v3M10 13v3M13 13v3M16 13v3" stroke="#774"/></svg></button>
                <span class="grip-h"></span>
                <button aria-label="注释"><svg viewBox="0 0 20 20"><path d="M1.500 2.500h12v8h-12z" fill="#ff9" stroke="#663"/><path d="M14 5.500h6l-7 12M13 13v5l4-2" stroke="#222"/></svg></button>
                <button aria-label="传播注释"><svg class="off" viewBox="0 0 20 20"><path d="M1.500 2.500h10v5h-10zM5.500 10.500h10v5h-10zM12 4h4l-2 4M16 12h4l-4 7M16 16v3h3"/></svg></button>
                <span class="grip-h"></span>
                <button aria-label="装配元件"><svg viewBox="0 0 20 20"><path d="M1 7h5v7h11l-3 5H1z" fill="#ec4" stroke="#752"/><path d="M12 3l2-2h6v5l-2 2h-6z" fill="#7dd" stroke="#367"/><path d="M13 8l-5 5M8 9v4h4" stroke="#000"/></svg></button>
                <button aria-label="创建元件"><svg viewBox="0 0 20 20"><path d="M1 4l3-3h12v10l-3 3H1z" fill="#fd4" stroke="#752"/><path d="M5 3h10v8H5z" fill="#7ee" stroke="#377"/><path d="M12.500 9.500h4l3 3v7h-7z" fill="#fff" stroke="#444"/></svg></button>
                <button aria-label="孔"><svg viewBox="0 0 20 20"><path d="M1 4h4l3 4v8H1zM19 4h-4l-3 4v8h7z" fill="#9de"/><path d="M2 4h4l2 3v9h4V7l2-3h4" stroke="#366"/></svg></button>
                <button aria-label="壳"><svg class="off" viewBox="0 0 20 20"><path d="M1 6h8v10H1M5 1h6l7 12-5 4-9 2M9 6l3-4 1 10-4 4M1 12h10"/></svg></button>
                <button aria-label="倒圆角"><svg class="off" viewBox="0 0 20 20"><path d="M3 1h7q9 4 8 11l-4 3Q12 5 3 1"/><path d="M14 14l5-4v5l-4 5z" fill="#aaa"/></svg></button>
                <button aria-label="倒角"><svg class="off" viewBox="0 0 20 20"><path d="M3 1h6l9 9-4 4L4 4"/><path d="M14 13l5-4v6l-5 5z" fill="#aaa"/></svg></button>
                <span class="grip-h"></span>
                <button aria-label="拉伸"><svg viewBox="0 0 20 20"><path d="M1.500 10.500h8v8h-8z" fill="#8ee" stroke="#367"/><path d="M3 9l6-7h8v8l-6 7M10 10l7-8" stroke="#a55" stroke-dasharray="3 1"/><path d="M9 2h8v8" stroke="#244" stroke-width="1.500"/></svg></button>
                <button aria-label="旋转"><svg viewBox="0 0 20 20"><circle cx="4" cy="11" r="3" fill="#bee" stroke="#477"/><circle cx="16" cy="11" r="4" fill="#6cc" stroke="#244"/><path d="M4 8l6-3 6 2" stroke="#a55"/><path d="M10 1v18" stroke="#000" stroke-dasharray="3 1"/></svg></button>
                <button aria-label="扫描混合"><svg viewBox="0 0 20 20"><path d="M1 5l5-4 5 6 8 2v10H13z" fill="#dff" stroke="#566"/><path d="M1 5l18 14h-6z" fill="#bbb" stroke="#566"/><path d="M1 5l5-4 2 3-4 3z" fill="#4cb" stroke="#255"/></svg></button>
                <button aria-label="边界混合"><svg viewBox="0 0 20 20"><path d="M1 14Q4 5 9 3t10-1q-3 6-6 14-5-4-12-2z" fill="#bee" stroke="#477"/><path d="M4 9q8-3 11 2M9 4q-2 4-3 9" stroke="#144"/><path d="M5 5Q10 1 19 2" stroke="#a44"/></svg></button>
                <button aria-label="造型"><svg viewBox="0 0 20 20"><path d="M2 4q8-3 16 1v12q-8-4-12-1l-4 2z" fill="#cee" stroke="#355"/></svg></button>
            </div>
            <div class="feature-col">
                <span class="grip-h"></span>
                <button aria-label="镜像"><svg class="off" viewBox="0 0 20 20"><path d="M10 0v20M1 4q6 2 6 8v6H1M19 4q-6 2-6 8v6h6"/></svg></button>
                <button aria-label="合并"><svg class="off" viewBox="0 0 20 20"><use href="#circlesq"/></svg></button>
                <button aria-label="修剪"><svg class="off" viewBox="0 0 20 20"><use href="#circlesq"/></svg></button>
                <button aria-label="阵列"><svg class="off" viewBox="0 0 20 20"><path d="M1.500 3l2-2h15v15l-2 2h-15z"/><path d="M5 6h11M5 10h11M5 14h11" stroke-width="2" stroke-dasharray="2 2"/></svg></button>
            </div>
        </aside>
    </main>

    <div class="statusbar">
        <select class="filter" aria-label="选取过滤器"><option>智能</option></select>
        <div class="netmeter">
            <span class="down"><svg viewBox="0 0 12 12"><path d="M6 1v9M2 6l4 4 4-4"/></svg>0.2KB/S</span>
            <span class="up"><svg viewBox="0 0 12 12"><path d="M6 11V2M2 6l4-4 4 4"/></svg>6.6KB/S</span>
            <span class="percent">92%</span>
        </div>
    </div>

    <footer class="taskbar">
        <button class="start"><svg viewBox="0 0 20 20"><path d="M3 4q3-2 7 0l-1 6q-4-2-7 0z" fill="#e53"/><path d="M11 4q3 2 7 0l-1 6q-3 2-7 0z" fill="#7c3"/><path d="M2 11q3-2 7 0l-1 6q-4-2-7 0z" fill="#48e"/><path d="M10 11q3 2 7 0l-1 6q-3 2-7 0z" fill="#fc3"/></svg>开始</button>
        <div class="tasks">
            <button><svg viewBox="0 0 16 16"><path d="M1 8l6-4 8 3v3l-6 3-8-3z" fill="#888"/><path d="M1 8l6-4 8 3-6 4z" fill="#ddd"/></svg>公司资料盘<i> (E:)</i></button>
            <button><svg viewBox="0 0 16 16"><path d="M1 13V3h5l2 2h5v8z" fill="#fd6" stroke="#a83"/><path d="M1 13l3-6h11l-2 6z" fill="#fea" stroke="#a83"/></svg>复件<i> CAR-888888</i></button>
            <button class="active"><svg viewBox="0 0 16 16"><use href="#proe"/></svg><i>ASM0001 (</i>活动的<i>)...</i></button>
            <button><svg viewBox="0 0 16 16"><use href="#page-e"/></svg>百度搜索<i>_</i>韩国工</button>
            <button><svg viewBox="0 0 16 16"><use href="#page-e"/></svg><i>liyanzhihui - </i>中<i>...</i></button>
            <button><svg viewBox="0 0 16 16"><path d="M3 7h9l-1 8H5z" fill="#987" stroke="#432"/><path d="M5 8L3 1" stroke="#fc3" stroke-width="2"/><path d="M8 8V1" stroke="#e33" stroke-width="2"/><path d="M10 8l3-6" stroke="#6c6" stroke-width="2"/></svg>未命名<i> - </i>画图</button>
        </div>
        <span class="lang">CH</span>
        <svg class="pen" viewBox="0 0 8 16"><path d="M2 1h4v3H5v11H3V4H2z" fill="#dfe9ff" stroke="#9bb"/></svg>
        <div class="tray">
            <button class="expand" aria-label="显示隐藏的图标"><svg viewBox="0 0 16 16"><path d="M10 4L6 8l4 4"/></svg></button>
            <svg viewBox="0 0 16 16"><path d="M0 2h6v9H0z" fill="#247"/><path d="M5 4h10v11H5z" fill="#ec5" stroke="#863"/><path d="M8 8h5v4H8z" fill="#fff" stroke="#a60"/></svg>
            <svg viewBox="0 0 16 16"><ellipse cx="8" cy="6" rx="5" ry="6" fill="#111"/><ellipse cx="8" cy="11" rx="6" ry="4" fill="#fff" stroke="#111"/><path d="M3 8q5 3 10 0v2q-5 3-10 0z" fill="#d22"/><path d="M6 6h4l-2 2z" fill="#fb0"/><path d="M6 3v2M10 3v2" stroke="#fff" stroke-width="2"/><path d="M2 15h5M9 15h5" stroke="#f90" stroke-width="2"/></svg>
            <svg viewBox="0 0 16 16"><path d="M1 5h3l5-4v14l-5-4H1z" fill="#c65" stroke="#522"/><path d="M11 3v10M13 2v12M15 4v8" stroke="#533"/></svg>
            <time>17:24</time>
        </div>
        <span class="watermark">BBS.CHINADE.NET</span>
    </footer>

    <script>
        const parts = ['ZDJ-101', 'ZDJ-07', 'ZDJ-08', 'PRT0021', 'PRT0022', 'PRT0020', 'ZDJ-05', 'ZDJ-05-R',
            'BB-02', 'ZDJ-06', 'ZDJ-04', 'PRT0019', 'ZDJ-02', 'ZDJ-03', 'ZDJ-01', 'XGX-24', 'XGX-23', 'XGX-23M',
            'XGX-22', 'XGX-22', 'XGX-20', 'XGX-20M', 'XGX-21', 'XGX-21M', 'XGX-25', 'XGX-25', 'ZDJ-09', 'ZDJ-10',
            'ZDJ-09-M', 'ZDJ-10-R', '▯PRT0015', 'PRT0015', 'PRT0012', 'PRT0012', 'PRT0004', 'PRT0004', 'DF',
            'PRT0003', 'DF-M', 'PRT0003-M'];
        const list = document.getElementById('parts');
        parts.forEach(name => {
            const item = document.createElement('li');
            item.innerHTML = '<svg viewBox="0 0 14 14"><use href="#part"/></svg>';
            item.append(name + '.PRT');
            list.appendChild(item);
        });
    </script>
</body>
</html>
```
FILE: styles.css
```css
* {
    box-sizing: border-box;
}
body {
    margin: 0;
    height: 100vh;
    display: flex;
    flex-direction: column;
    overflow: hidden;
    background: #ece9d8;
    color: #000;
    font: 12px/16px "Noto Sans CJK SC", sans-serif;
}
button {
    margin: 0;
    padding: 0;
    border: 0;
    background: none;
    color: inherit;
    font: inherit;
}
svg {
    display: block;
    flex: none;
    fill: none;
}
i {
    font: 10px/16px "DejaVu Sans Mono", monospace;
    white-space: pre;
}
.defs {
    position: absolute;
    width: 0;
    height: 0;
}
.caret {
    border: 4px solid transparent;
    border-top-color: #000;
    border-bottom: 0;
}

/* title bar */
.titlebar {
    flex: none;
    height: 26px;
    display: flex;
    align-items: center;
    gap: 4px;
    padding: 0 2px;
    background: linear-gradient(#3c96ff, #0c5be8 15%, #0453e0 45%, #0566ff 85%, #0344bd);
}
.icon16 {
    width: 16px;
    height: 16px;
}
.titlebar h1 {
    flex: 1;
    margin: 0;
    color: #fff;
    font: bold 13px/20px "Liberation Mono", "Noto Sans CJK SC", monospace;
    text-shadow: 1px 1px #0a2a7a;
}
.titlebar h1 span {
    font-size: 14px;
}
.window-buttons {
    display: flex;
    gap: 2px;
}
.window-buttons button {
    width: 21px;
    height: 21px;
    border: 1px solid #fff;
    border-radius: 3px;
    background: linear-gradient(135deg, #7ba0f5, #2456d8 50%, #1c49c4);
}
.window-buttons .close {
    background: linear-gradient(135deg, #f0a088, #d9492a 50%, #b83312);
}
.window-buttons svg {
    stroke: #fff;
}

/* menus and tools */
.menubar {
    flex: none;
    height: 24px;
    display: flex;
    align-items: center;
    gap: 12px;
    padding: 0 5px 3px;
    border-bottom: 1px solid #c5c2b2;
    background: linear-gradient(90deg, #f3f2ea, #ece9d8);
}
.menubar button {
    display: flex;
}
.toolbar {
    flex: none;
    height: 31px;
    display: flex;
    align-items: center;
    border-top: 1px solid #fff;
    border-bottom: 1px solid #9d9a8b;
    background: linear-gradient(90deg, #f5f4ee, #ece9d8);
}
.toolbar button {
    width: 28px;
    height: 28px;
    display: flex;
    align-items: center;
    justify-content: center;
}
.toolbar svg {
    width: 20px;
    height: 20px;
}
.toolbar .narrow {
    width: 14px;
}
.toolbar .narrow svg {
    width: 8px;
}
.toolbar .framed {
    width: 26px;
    height: 26px;
    border: 1px solid #c9c6b6;
    border-radius: 3px;
}
.toolbar .on {
    border: 1px solid #7f9db9;
    border-radius: 3px;
    background: #fff;
}
.grip {
    width: 2px;
    height: 24px;
    margin: 0 6px 0 5px;
    background: repeating-linear-gradient(#a5a294 0 2px, transparent 2px 4px);
}
.off {
    stroke: #aaa89c;
}
.dark {
    stroke: #555;
}
.dashboard {
    flex: none;
    height: 32px;
    display: flex;
    justify-content: flex-end;
    padding: 0 2px;
    border-top: 1px solid #fff;
    border-left: 1px solid #aaa;
    background: linear-gradient(90deg, #f5f4f0, #ece9d8);
}
.stepper {
    display: flex;
    flex-direction: column;
    gap: 1px;
}
.stepper button {
    width: 14px;
    height: 13px;
    border: 1px solid #a9bdf0;
    background: #c8d6fb;
}
.stepper svg {
    width: 12px;
    fill: #3b5487;
}

/* model tree */
main {
    flex: 1;
    min-height: 0;
    display: flex;
}
.navigator {
    flex: none;
    width: 268px;
    display: flex;
    flex-direction: column;
}
.tabs {
    flex: none;
    height: 29px;
    display: flex;
    align-items: flex-end;
    gap: 2px;
}
.tabs button {
    width: 30px;
    height: 27px;
    display: flex;
    align-items: center;
    justify-content: center;
    border: 1px solid #a5b0b5;
    border-bottom: 0;
    border-radius: 3px 3px 0 0;
    background: #f4f3ec;
}
.tabs .active {
    width: 35px;
    height: 29px;
    border-top: 2px solid #f0a030;
    background: #fff;
}
.tabs svg {
    width: 20px;
    height: 20px;
}
.nav-body {
    flex: 1;
    min-height: 0;
    display: flex;
    flex-direction: column;
    padding: 2px;
    border: 1px solid #919b9c;
    border-left-color: #ccc;
    background: #fcfcfe;
}
.nav-buttons {
    display: flex;
    gap: 2px;
}
.nav-buttons button {
    width: 78px;
    height: 18px;
    display: flex;
    align-items: center;
    justify-content: flex-end;
    padding-right: 5px;
    border: 1px solid #003c74;
    border-radius: 3px;
    background: linear-gradient(#fff, #e9e7dd);
}
.nav-buttons .caret {
    margin-left: 5px;
}
.tree-box {
    flex: 1;
    min-height: 0;
    display: flex;
    flex-direction: column;
    margin-top: 1px;
    border: 1px solid #8195a5;
    background: #fff;
}
.tree-head {
    flex: none;
    height: 18px;
    border-bottom: 1px solid #cbc7b8;
    background: #ebeadb;
}
.tree-scroll {
    flex: 1;
    min-height: 0;
    display: flex;
}
.tree {
    flex: 1;
    overflow: hidden;
    font: 10px/16px "DejaVu Sans Mono", monospace;
}
.root {
    display: flex;
    align-items: center;
    gap: 4px;
    height: 16px;
    margin-top: 2px;
    padding-left: 2px;
}
.root svg {
    width: 14px;
    height: 14px;
}
.tree ul {
    margin: 0 0 0 10px;
    padding: 0;
    list-style: none;
    background: repeating-linear-gradient(#aaa 0 1px, transparent 1px 2px) 0 0 / 1px calc(100% - 8px) no-repeat;
}
.tree li {
    display: flex;
    align-items: center;
    gap: 4px;
    height: 16px;
}
.tree li::before {
    content: "";
    width: 8px;
    border-top: 1px dotted #aaa;
}
.tree li svg {
    width: 13px;
    height: 13px;
}
.scrollbar {
    flex: none;
    width: 16px;
    display: flex;
    flex-direction: column;
    padding: 1px;
    background: #f5f6fc;
}
.scrollbar button {
    width: 14px;
    height: 15px;
    display: flex;
    align-items: center;
    justify-content: center;
    border-radius: 2px;
    background: #c6d5fb;
}
.scrollbar svg {
    width: 12px;
    stroke: #4d6185;
    stroke-width: 2;
}
.thumb {
    flex: 1;
    display: flex;
    align-items: center;
    justify-content: center;
    margin: 2px 0 5px;
    border: 1px solid #a9bdf5;
    border-radius: 2px;
    background: linear-gradient(90deg, #c9d8fc, #bccdf8);
}
.thumb span {
    width: 6px;
    height: 7px;
    background: repeating-linear-gradient(#8ca6e8 0 1px, #eef4fe 1px 2px);
}
.splitter {
    flex: none;
    width: 14px;
    display: grid;
    grid-template-columns: 6px 6px;
    grid-template-rows: 317px 48px 50px;
    padding-left: 2px;
    background: linear-gradient(90deg, #ece9d8 2px, #8c9cb5 2px 3px, #e8e8e8 3px 7px, #8a98d0 7px 9px, #e6e6ea 9px);
}
.splitter button {
    display: flex;
    align-items: center;
    justify-content: center;
    background: #c4d4fa;
}
.splitter svg {
    width: 5px;
    stroke: #4d6185;
    stroke-width: 2;
}
.fold {
    grid-area: 2 / 1;
}
.unfold {
    grid-area: 3 / 2;
}

/* graphics window */
.viewport {
    flex: 1;
    min-width: 0;
    background: linear-gradient(#00609f, #004b85 30%, #003062 60%, #001b46 82%, #001030);
}
.viewport svg {
    width: 100%;
    height: 100%;
}
.w {
    fill: #fafafa;
}
.l {
    fill: #ededed;
}
.g {
    fill: #aaa;
}
.m {
    fill: #b4b4b4;
}
.d {
    fill: #646464;
}
.k {
    fill: none;
    stroke: #333;
    stroke-width: 3px;
}

/* feature tools */
.features {
    flex: none;
    width: 69px;
    display: flex;
    gap: 2px;
    padding-left: 1px;
    background: linear-gradient(90deg, #f3f2ee, #ece9d8);
}
.feature-col {
    width: 40px;
}
.feature-col + .feature-col {
    width: 26px;
}
.feature-col button {
    width: 26px;
    height: 28px;
    display: flex;
    align-items: center;
    justify-content: center;
}
.feature-col svg {
    width: 20px;
    height: 20px;
}
.feature-col .with-menu {
    width: 40px;
    justify-content: flex-start;
    gap: 6px;
    padding-left: 3px;
}
.with-menu .caret {
    border-width: 3px 3px 0;
}
.grip-h {
    display: block;
    height: 2px;
    margin: 5px 0 6px;
    background: repeating-linear-gradient(90deg, #a5a294 0 2px, transparent 2px 4px);
}
.grip-h:first-child {
    margin: 4px 0 5px;
}

/* status line */
.statusbar {
    position: relative;
    flex: none;
    height: 24px;
    display: flex;
    justify-content: flex-end;
    align-items: center;
    padding-right: 60px;
    background: linear-gradient(#aca899, #aca899) calc(100% - 336px) 0 / 1px 100% no-repeat;
}
.filter {
    appearance: none;
    width: 179px;
    height: 18px;
    padding: 0 4px;
    border: 1px solid #8d9aa5;
    border-radius: 0;
    background: #fff;
    color: #000;
    font: 12px/16px "Noto Sans CJK SC", sans-serif;
}
.netmeter {
    position: absolute;
    right: 0;
    bottom: 4px;
    width: 206px;
    height: 23px;
    display: flex;
    align-items: center;
    border-radius: 8px;
    background: linear-gradient(#5fb0dc, #3a95cd 60%, #4fa8d8);
    color: #fff;
    font: 10px/16px "DejaVu Sans Mono", monospace;
}
.netmeter span {
    display: flex;
    align-items: center;
    gap: 12px;
    width: 78px;
}
.netmeter .down {
    width: 88px;
    padding-left: 11px;
}
.netmeter svg {
    width: 12px;
    stroke-width: 2;
}
.down svg {
    stroke: #7f7;
}
.up svg {
    stroke: #fb2;
}
.netmeter .percent {
    flex: 1;
    height: 23px;
    justify-content: center;
    border-left: 1px solid #9cd4ef;
    border-radius: 0 8px 8px 0;
    background: linear-gradient(#a5d6ee, #62b2dc);
    color: #c98a10;
}

/* taskbar */
.taskbar {
    position: relative;
    flex: none;
    height: 30px;
    display: flex;
    align-items: center;
    background: linear-gradient(#1c4fae, #4389f0 8%, #265fdc 20%, #2459d6 85%, #1a42a5);
    color: #fff;
}
.start {
    width: 97px;
    height: 29px;
    display: flex;
    align-items: center;
    gap: 6px;
    padding: 0 10px;
    border-radius: 0 12px 12px 0;
    background: linear-gradient(#3a8a3c, #4fa84c 15%, #3b9439 50%, #379035 85%, #28702a);
    font: italic 19px/24px "Noto Sans CJK SC", sans-serif;
    text-shadow: 1px 1px 1px #1c4d1c;
}
.start svg {
    width: 20px;
    height: 20px;
}
.tasks {
    flex: 1;
    min-width: 0;
    display: flex;
    gap: 1px;
    padding-left: 9px;
}
.tasks button {
    width: 159px;
    height: 24px;
    display: flex;
    align-items: center;
    padding: 0 10px;
    border-radius: 2px;
    background: linear-gradient(#5e9bfb, #3c81f3 20%, #3a7cf0 80%, #2f6ad8);
    white-space: pre;
}
.tasks .active {
    background: #1b48a8;
}
.tasks svg {
    width: 16px;
    height: 16px;
    margin-right: 4px;
}
.lang {
    font: 10px/16px "DejaVu Sans Mono", monospace;
}
.pen {
    width: 8px;
    height: 16px;
    margin: 0 13px 0 8px;
}
.tray {
    height: 29px;
    display: flex;
    align-items: center;
    gap: 2px;
    width: 112px;
    background: linear-gradient(#18a0ee, #1290e8 50%, #0f80d5);
}
.tray svg {
    width: 16px;
    height: 16px;
}
.expand {
    margin-left: -8px;
    border-radius: 50%;
    background: #2f8ff0;
    box-shadow: inset 0 0 2px #fff;
}
.expand svg {
    stroke: #fff;
    stroke-width: 2;
}
.tray time {
    margin-left: 4px;
    font: 10px/16px "DejaVu Sans Mono", monospace;
}
.watermark {
    position: absolute;
    left: 622px;
    top: 0;
    color: rgba(225, 50, 90, 0.8);
    font: bold 21px/22px "Liberation Serif", serif;
}
```
